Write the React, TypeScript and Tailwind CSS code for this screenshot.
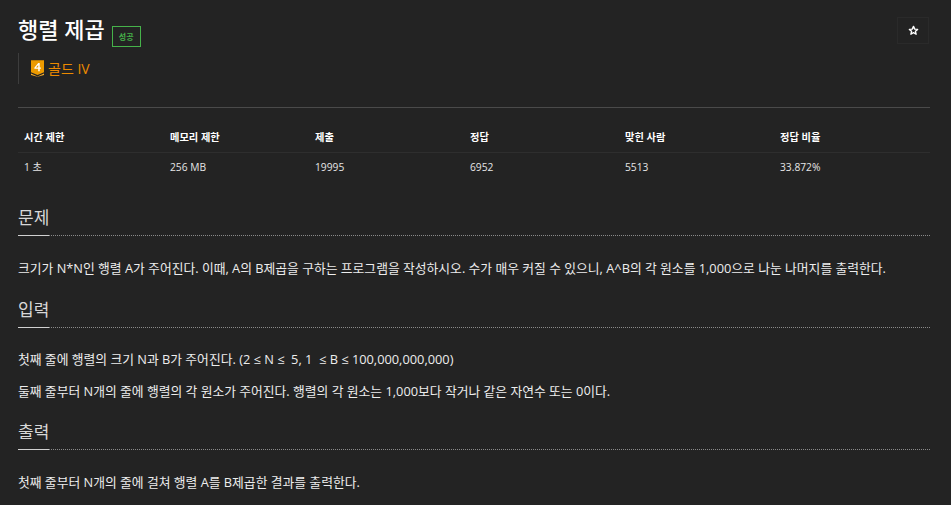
const font = "font-['Open_Sans','Noto_Sans_CJK_KR',sans-serif]";

const stats = [
  ["시간 제한", "1 초"],
  ["메모리 제한", "256 MB"],
  ["제출", "19995"],
  ["정답", "6952"],
  ["맞힌 사람", "5513"],
  ["정답 비율", "33.872%"],
];

function SectionHeading({ title }: { title: string }) {
  return (
    <div className="border-b border-dotted border-[#8a8a8a]">
      <h2 className="inline-block h-[30px] border-b border-[#d0d0d0] -mb-px text-[17px] leading-[24px] font-normal text-[#d8d8d8]">
        {title}
      </h2>
    </div>
  );
}

function TierBadge() {
  return (
    <svg width="13" height="17" viewBox="0 0 14 18" className="shrink-0">
      <path d="M0 0H14V13L7 16L0 13Z" fill="#ec9a00" />
      <path d="M0 14.5L7 17.5L14 14.5V16L7 18L0 16Z" fill="#ffb028" />
      <path d="M7.8 3H9.4V8H10.6V9.4H9.4V12H7.8V9.4H3.6V8.2ZM7.8 8V5.3L5.3 8Z" fill="#ffffff" />
    </svg>
  );
}

export default function App() {
  return (
    <div className={`${font} w-[951px] h-[505px] overflow-hidden bg-[#232323] pl-[18px] pr-[21px] text-[#ededed] text-[12.8px]`}>
      {/* Title */}
      <div className="flex items-start justify-between pt-[16px]">
        <div className="flex items-start">
          <h1 className="text-[22px] leading-[26px] font-medium text-white">행렬 제곱</h1>
          <span className="ml-[7px] mt-[10px] flex h-[21px] w-[29px] items-center justify-center border border-[#46b24a] text-[8px] font-bold text-[#46b24a]">
            성공
          </span>
        </div>
        <button className="mt-[1px] mr-[1px] flex h-[27px] w-[32px] items-center justify-center border border-[#2a2a2a]">
          <svg width="11" height="11" viewBox="0 0 24 24" fill="none" stroke="#ffffff" strokeWidth="3" strokeLinejoin="round">
            <path d="M12 3l2.7 6 6.3.6-4.8 4.2 1.5 6.4L12 16.8l-5.7 3.4 1.5-6.4L3 9.6 9.3 9z" />
          </svg>
        </button>
      </div>

      {/* Tier */}
      <div className="mt-[6px] flex h-[31px] items-center gap-[4px] border-l border-[#3d3d3d] pl-[12px]">
        <TierBadge />
        <span className="text-[14px] text-[#ec8a00]">골드 IV</span>
      </div>

      <div className="mt-[23px] border-t border-[#4a4a4a]" />

      {/* Stats table */}
      <div className="mt-[15px] grid grid-cols-[146px_145px_155px_155px_155px_156px] text-[10.24px]">
        {stats.map(([label]) => (
          <div key={label} className="h-[30px] border-b border-[#2e2e2e] pl-[6px] pt-[6px] font-bold text-white leading-[16px]">
            {label}
          </div>
        ))}
        {stats.map(([label, value]) => (
          <div key={label} className="h-[28px] pl-[6px] pt-[6px] text-[#e6e6e6] leading-[16px]">
            {value}
          </div>
        ))}
      </div>

      {/* Problem */}
      <div className="mt-[25px]">
        <SectionHeading title="문제" />
        <p className="mt-[22px] leading-[20px]">
          크기가 N*N인 행렬 A가 주어진다. 이때, A의 B제곱을 구하는 프로그램을 작성하시오. 수가 매우 커질 수 있으니, A^B의 각 원소를 1,000으로 나눈 나머지를 출력한다.
        </p>
      </div>

      <div className="mt-[20px]">
        <SectionHeading title="입력" />
        <p className="mt-[21px] leading-[20px]">
          첫째 줄에 행렬의 크기 N과 B가 주어진다. (2 ≤ N ≤&nbsp; 5, 1&nbsp; ≤ B ≤ 100,000,000,000)
        </p>
        <p className="mt-[12px] leading-[20px]">
          둘째 줄부터 N개의 줄에 행렬의 각 원소가 주어진다. 행렬의 각 원소는 1,000보다 작거나 같은 자연수 또는 0이다.
        </p>
      </div>

      <div className="mt-[19px]">
        <SectionHeading title="출력" />
        <p className="mt-[22px] leading-[20px]">첫째 줄부터 N개의 줄에 걸쳐 행렬 A를 B제곱한 결과를 출력한다.</p>
      </div>
    </div>
  );
}
